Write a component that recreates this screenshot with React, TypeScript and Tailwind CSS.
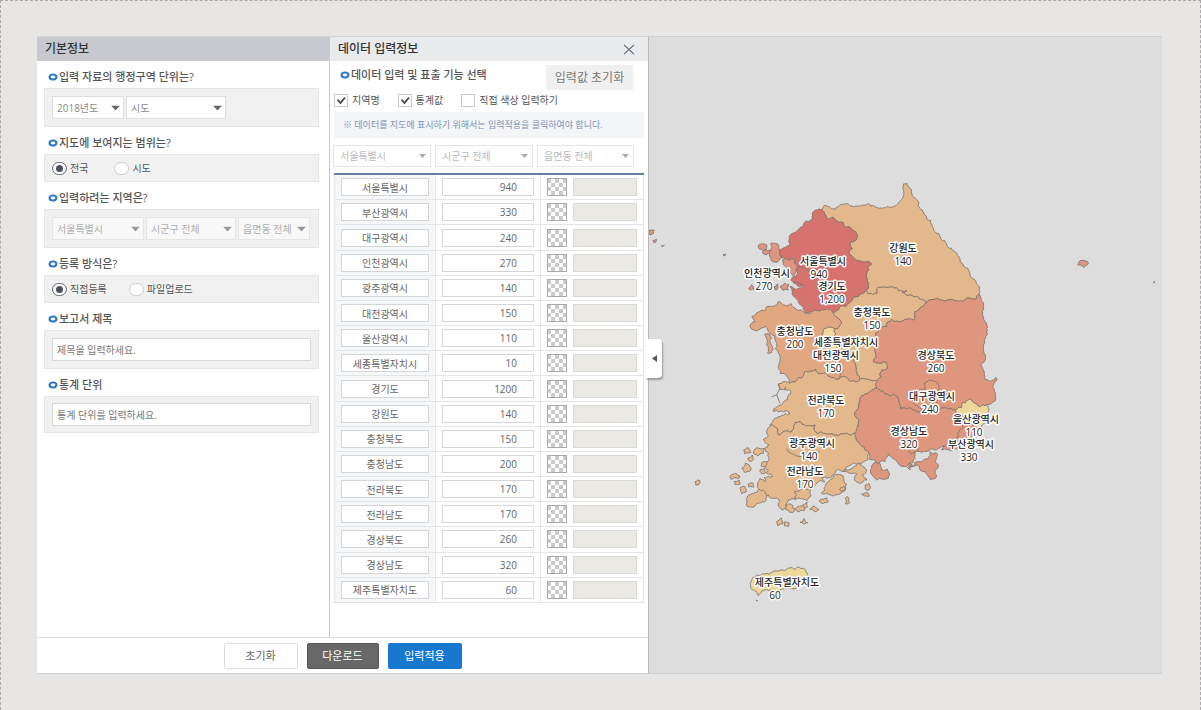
import React, { useId } from "react";

type Point = [number, number];

const REGIONS = ["서울특별시", "부산광역시", "대구광역시", "인천광역시", "광주광역시", "대전광역시", "울산광역시", "세종특별자치시", "경기도", "강원도", "충청북도", "충청남도", "전라북도", "전라남도", "경상북도", "경상남도", "제주특별자치도"];
const VALUES = [940, 330, 240, 270, 140, 150, 110, 10, 1200, 140, 150, 200, 170, 170, 260, 320, 60];

function parse(s: string): Point[] {
  return s.trim().split(/\s+/).map((p) => p.split(",").map(Number) as Point);
}

// Roughens an edge the same way from either end, so neighbouring provinces share one border.
function split(a: Point, b: Point, depth: number): Point[] {
  const dx = b[0] - a[0];
  const dy = b[1] - a[1];
  const len = Math.hypot(dx, dy);
  if (depth === 0 || len < 6) return [a];
  const forward = a[0] < b[0] || (a[0] === b[0] && a[1] < b[1]);
  const seed = Math.sin((a[0] + b[0]) * 12.9898 + (a[1] + b[1]) * 78.233) * 43758.5453;
  const r = (seed - Math.floor(seed) - 0.5) * (forward ? 1 : -1) * 0.46;
  const m: Point = [(a[0] + b[0]) / 2 - dy * r, (a[1] + b[1]) / 2 + dx * r];
  return [...split(a, m, depth - 1), ...split(m, b, depth - 1)];
}

function toPath(s: string): string {
  const pts = parse(s);
  const out = pts.flatMap((p, i) => split(p, pts[(i + 1) % pts.length], 3));
  return "M" + out.map((p) => p[0].toFixed(1) + " " + p[1].toFixed(1)).join("L") + "Z";
}

const ORANGE = "#e3b88d";
const SALMON = "#de967e";
const PEACH = "#e1a780";
const RED = "#d6736f";
const YELLOW = "#eed79a";

const SHAPES: [string, string][] = [
  [ORANGE, "288,120 300,106 340,110 372,104 400,108 430,101 448,108 475,114 500,112 520,98 532,85 535,42 546,40 556,55 562,78 578,92 592,120 605,145 622,165 640,190 660,212 680,235 700,258 715,285 735,312 758,345 762,372 752,388 725,384 700,395 680,388 660,393 640,386 615,390 605,398 590,388 565,380 545,376 532,368 545,362 520,362 505,352 480,350 460,352 455,372 430,372 422,362 424,320 432,300 428,292 440,282 425,275 400,272 385,262 372,245 382,236 375,215 390,212 392,185 378,175 360,172 355,158 335,152 325,142 305,145 298,128"],
  [RED, "288,120 275,120 262,128 262,142 240,155 232,170 210,188 196,195 197,228 180,232 165,240 172,262 190,270 205,265 208,280 215,300 212,318 200,325 205,338 235,346 220,356 195,350 205,378 215,388 222,400 235,412 240,425 250,428 262,426 285,424 300,418 325,430 340,420 352,408 375,398 385,382 410,372 422,362 424,320 432,300 428,292 440,282 425,275 400,272 385,262 372,245 382,236 375,215 390,212 392,185 378,175 360,172 355,158 335,152 325,142 305,145 298,128"],
  [SALMON, "133,245 136,222 150,219 162,226 165,240 172,262 160,273 145,275 136,262"],
  [SALMON, "99,228 112,222 126,226 124,237 104,238"],
  [SALMON, "112,246 124,239 136,242 130,251 116,252"],
  [SALMON, "172,270 190,270 205,265 208,280 215,300 205,318 190,308 185,290"],
  [SALMON, "165,350 178,340 192,345 190,360 172,360"],
  [SALMON, "71,354 80,344 88,357 76,360"],
  [SALMON, "147,350 158,342 159,354 150,360"],
  [ORANGE, "325,430 340,420 352,408 375,398 385,382 410,372 422,362 430,372 455,372 460,352 480,350 505,352 520,362 545,362 532,368 545,376 565,380 590,388 605,398 590,410 570,425 565,450 545,448 520,455 500,448 485,470 465,475 452,490 460,520 450,545 445,575 485,578 488,595 470,600 468,620 455,632 430,628 405,626 395,612 392,590 390,560 350,540 326,505 328,478 345,465 350,455 335,440"],
  [PEACH, "105,425 125,410 140,410 160,395 175,405 200,402 225,420 240,430 262,426 285,424 300,418 325,430 335,440 350,455 345,465 328,478 300,475 298,510 315,540 345,590 345,618 345,625 300,608 280,612 272,598 240,605 232,622 195,640 165,610 160,590 165,570 160,550 155,520 150,498 140,492 130,485 120,468 105,478 75,470 90,455 80,440 95,428"],
  [PEACH, "120,492 132,492 136,520 140,548 128,550 124,525"],
  [YELLOW, "300,475 328,478 326,505 350,540 340,555 315,540 298,510"],
  [PEACH, "315,540 340,555 350,540 390,560 392,590 395,612 405,626 380,634 345,625 345,618 355,600 340,585"],
  [ORANGE, "160,642 195,640 232,622 240,605 272,598 280,612 300,608 345,625 380,634 405,626 430,628 455,632 455,655 435,665 405,685 400,715 388,735 400,760 390,790 355,792 300,790 275,790 270,765 245,768 222,755 200,785 160,795 148,770 135,764 145,750 168,738 195,732 185,722 145,724 165,706 188,690 188,680 196,672 194,660 182,660 182,650 178,660 165,658"],
  [SALMON, "605,398 615,390 640,386 660,393 680,388 700,395 725,384 752,388 762,372 775,410 773,435 788,470 788,492 775,530 770,580 778,610 780,628 790,632 812,622 815,632 808,660 800,700 785,705 750,700 730,690 710,700 710,712 690,720 665,715 630,718 600,720 560,715 525,718 520,690 505,672 480,672 455,655 455,632 468,620 470,600 488,595 485,578 445,575 450,545 460,520 452,490 465,475 485,470 500,448 520,455 545,448 565,450 570,425 590,410"],
  ["#e09f7d", "562,692 575,685 575,668 600,658 596,642 632,635 642,660 625,680 635,700 610,722 580,712"],
  [SALMON, "455,655 480,672 505,672 520,690 525,718 560,715 600,720 630,718 665,715 690,720 700,735 735,750 750,775 735,790 700,800 690,815 660,828 640,835 615,838 590,848 578,840 570,865 550,885 520,882 500,862 490,852 480,875 460,880 435,870 432,850 400,815 388,790 400,760 388,735 400,715 405,685 435,665"],
  [SALMON, "715,760 735,758 752,778 745,795 720,815 705,835 680,842 650,840 655,828 690,815 700,800"],
  [YELLOW, "690,720 710,712 710,700 730,690 750,700 785,705 792,720 782,745 770,770 745,768 735,750 700,735"],
  [SALMON, "440,895 450,878 465,880 468,900 488,898 490,925 465,925 455,930 442,915"],
  [SALMON, "555,890 590,875 610,865 615,845 635,850 630,875 640,890 630,905 635,918 615,928 602,905 585,900 575,885"],
  [SALMON, "550,842 575,832 580,845 560,852"],
  [SALMON, "552,880 562,885 556,900 548,894"],
  [ORANGE, "160,795 200,785 222,755 245,768 270,765 275,790 300,790 355,792 390,790 388,790 400,815 432,850 430,868 410,880 385,878 370,888 350,905 338,898 320,920 305,925 290,920 300,935 270,945 255,960 240,975 215,980 200,985 185,1000 172,1020 160,1005 163,990 145,985 130,975 100,970 98,945 105,925 120,935 118,922 142,920 125,910 130,900 122,880 132,865 120,835 132,825 115,808 130,795 128,775 135,764 148,770"],
  [ORANGE, "290,970 300,950 315,930 325,918 355,918 365,942 360,962 345,972 305,970"],
  [ORANGE, "355,905 375,898 385,890 410,886 425,900 412,915 425,930 405,940 388,930 395,912"],
  [ORANGE, "65,1000 75,975 90,968 100,960 115,960 125,975 120,995 90,1008 68,1010"],
  [ORANGE, "210,990 208,965 225,960 255,960 258,975 245,992 225,985"],
  [ORANGE, "56,840 72,835 78,848 60,852"], [ORANGE, "85,845 95,833 118,835 115,850 98,858"],
  [ORANGE, "68,865 82,855 86,868 74,874"], [ORANGE, "50,895 60,880 75,890 78,900 60,908"],
  [ORANGE, "15,920 35,912 45,918 38,926 18,928"], [ORANGE, "27,935 42,930 45,942 30,943"],
  [ORANGE, "70,942 85,940 85,952 72,952"], [ORANGE, "45,955 60,950 64,965 50,972"],
  [ORANGE, "105,900 118,895 122,908 110,912"], [ORANGE, "110,878 125,875 120,890 108,888"],
  [ORANGE, "182,1005 200,1003 210,1022 195,1027 182,1018"], [ORANGE, "208,1015 235,1008 238,1022 218,1025"],
  [ORANGE, "235,1003 248,995 248,1010 238,1015"], [ORANGE, "255,1018 265,1008 282,1018 268,1024"],
  [ORANGE, "282,993 305,983 310,995 290,1000"], [ORANGE, "360,985 368,980 375,998 362,1002"],
  [ORANGE, "410,972 425,968 432,980 418,978"], [ORANGE, "420,945 432,940 432,960 421,958"],
  [ORANGE, "345,955 358,950 358,962 348,964"],
  [ORANGE, "155,1055 170,1044 175,1060 160,1068"], [ORANGE, "177,1056 192,1058 190,1070 178,1068"],
  [ORANGE, "225,1056 238,1045 248,1058 235,1062"], [ORANGE, "-90,935 -82,930 -74,933 -80,945 -88,945"],
  [YELLOW, "75,1240 90,1220 120,1212 165,1202 190,1194 210,1198 235,1195 248,1210 245,1225 230,1242 180,1255 130,1262 110,1263 100,1277 88,1262 78,1255"],
  [SALMON, "-228,182 -212,180 -214,190 -222,194 -228,192"], [SALMON, "-216,212 -206,208 -208,217 -214,218"],
  [SALMON, "-192,227 -182,225 -188,230"], [SALMON, "-6,254 2,252 0,257 -5,257"],
  [SALMON, "1058,284 1062,276 1078,272 1088,275 1088,284 1076,293"],
  [SALMON, "1286,336 1288,334 1289,338 1287,339"], [ORANGE, "94,1291 96,1290 97,1293 95,1293"],
];

const RIVERS = ["210,300 225,288 240,295 252,305 262,300 278,310", "185,835 190,845 215,858 245,862 270,860 282,845", "160,642 165,655 155,675 165,700", "155,675 140,680", "205,338 214,336 235,346"];

const LABELS: [number, number, string, string][] = [
  [174, 228, "서울특별시", "940"], [254, 215, "강원도", "140"], [118, 240, "인천광역시", "270"], [183, 253, "경기도", "1,200"],
  [223, 279, "충청북도", "150"], [146, 298, "충청남도", "200"], [197, 309, "세종특별자치시", ""], [187, 322, "대전광역시", "150"],
  [287, 322, "경상북도", "260"], [177, 367, "전라북도", "170"], [283, 363, "대구광역시", "240"], [327, 386, "울산광역시", "110"],
  [260, 398, "경상남도", "320"], [322, 411, "부산광역시", "330"], [163, 410, "광주광역시", "140"], [156, 438, "전라남도", "170"],
  [138, 549, "제주특별자치도", "60"],
];

const VALUE_X: Record<string, number> = { "서울특별시": 170, "인천광역시": 115, "대전광역시": 184, "대구광역시": 281, "울산광역시": 325, "부산광역시": 320, "광주광역시": 160, "제주특별자치도": 126 };

function KoreaMap() {
  return (
    <svg className="block h-full w-full" role="img" aria-label="시도별 통계 지도">
      <g transform="translate(76 133) scale(0.33333)" stroke="#85766b" strokeWidth="2.7" strokeLinejoin="round">
        {SHAPES.map(([fill, s], i) => <path key={i} d={toPath(s)} fill={fill} />)}
        {RIVERS.map((s) => <polyline key={s} points={s} fill="none" />)}
      </g>
      <g className="text-[10px] font-medium" fill="#222" stroke="#fff" strokeWidth="3" strokeLinejoin="round" textAnchor="middle" paintOrder="stroke">
        {LABELS.map(([x, y, name, value]) => (
          <g key={name}>
            <text x={x} y={y}>{name}</text>
            {value && <text x={VALUE_X[name] ?? x} y={y + 13}>{value}</text>}
          </g>
        ))}
      </g>
    </svg>
  );
}

function Caption({ children }: { children: React.ReactNode }) {
  return (
    <span className="flex items-center gap-px text-[11px] leading-4 font-medium text-[#555]">
      <svg className="h-[8px] w-[10px] shrink-0" viewBox="0 0 10 8"><ellipse cx="5" cy="4" rx="3.4" ry="2.5" fill="#fff" stroke="#2e7cc4" strokeWidth="2.2" /></svg>
      {children}
    </span>
  );
}

function Section({ title, children, field }: { title: string; children: React.ReactNode; field?: string }) {
  return (
    <section>
      <div className="flex h-[27px] items-center px-1 pt-1">
        {field ? <label htmlFor={field}><Caption>{title}</Caption></label> : <Caption>{title}</Caption>}
      </div>
      <div className="flex items-center border border-[#e6e6e6] bg-[#f1f1f1] px-[7px]">{children}</div>
    </section>
  );
}

function Select({ label, value, width, tone }: { label: string; value: string; width: string; tone: "on" | "off" | "faint" }) {
  const skin = tone === "on" ? "h-[23px] border-[#ddd] bg-white text-[#888]" : tone === "off" ? "h-[23px] border-[#e5e5e5] bg-[#f8f8f8] text-[#b0b0b0]" : "h-[22px] border-[#e6e6e6] bg-white text-[#bbb]";
  const pad = tone === "faint" ? " pl-[6px]" : " pl-1";
  const arrow = tone === "on" ? "#666" : tone === "off" ? "#999" : "#aaa";
  return (
    <span className={"relative block " + width}>
      <select aria-label={label} disabled={tone !== "on"} className={"block w-full appearance-none border text-[10px] leading-4 opacity-100 " + skin + pad}>
        <option>{value}</option>
      </select>
      <svg className={"pointer-events-none absolute top-1/2 h-[5px] -translate-y-1/2 " + (tone === "faint" ? "right-[5px] w-[7px]" : "right-1 w-[9px]")} viewBox="0 0 9 5"><path d="M0 0h9L4.500 5z" fill={arrow} /></svg>
    </span>
  );
}

function Radio({ name, label, checked }: { name: string; label: string; checked?: boolean }) {
  const id = useId();
  return (
    <span className="flex items-center gap-[3px]">
      <input id={id} type="radio" name={name} defaultChecked={checked} className="grid h-[13px] w-[15px] appearance-none place-items-center rounded-full border border-[#ccc] bg-white before:h-[7px] before:w-[7px] before:rounded-full checked:border-[#666a75] checked:before:bg-[#4a4f5b]" />
      <label htmlFor={id} className="text-[10px] leading-4 text-[#555]">{label}</label>
    </span>
  );
}

function Check({ label, checked }: { label: string; checked?: boolean }) {
  const id = useId();
  return (
    <span className="flex items-center gap-1">
      <span className="relative block h-[13px] w-[14px]">
        <input id={id} type="checkbox" defaultChecked={checked} className="peer block h-[13px] w-[14px] appearance-none border border-[#c8c8c8] bg-white" />
        <svg className="pointer-events-none absolute inset-0 hidden h-[13px] w-[14px] peer-checked:block" viewBox="0 0 14 13"><path d="M3.500 5.500l3 3.500 4.500-5.500" fill="none" stroke="#444b57" strokeWidth="1.800" /></svg>
      </span>
      <label htmlFor={id} className="text-[10px] leading-4 text-[#555]">{label}</label>
    </span>
  );
}

function Swatch() {
  const cells = [0, 1, 2, 3].flatMap((r) => [0, 1, 2, 3, 4].filter((c) => (r + c) % 2 === 0).map((c) => [c, r]));
  return (
    <svg className="block h-[18px] w-5" viewBox="0 0 20 18" shapeRendering="crispEdges">
      <rect width="20" height="18" fill="#fff" />
      {cells.map(([c, r]) => <rect key={c + "-" + r} x={c * 4} y={1 + r * 4} width="4" height="4" fill="#cbcbcb" />)}
      <rect x="0.500" y="0.500" width="19" height="17" fill="none" stroke="#aaa" />
    </svg>
  );
}

export default function App() {
  return (
    <main className="grid min-h-screen border-x border-t border-dashed border-[#aaa] bg-[#e7e6e4] pt-[35px] pr-[38px] pb-9 pl-9 font-['Open_Sans','Noto_Sans_CJK_KR',sans-serif]">
      <div className="flex items-stretch border-b border-[#cdd0d4]">
        <div className="relative z-10 flex w-[612px] shrink-0 flex-col border-t border-r border-t-[#d4d4d4] border-r-[#b8b8b8] bg-white">
          <div className="flex flex-1">
            <section className="w-[292px] shrink-0">
              <h2 className="h-6 bg-[#c8c9cf] px-2 text-[12px] leading-6 font-medium text-[#333]">기본정보</h2>
              <div className="pr-[10px] pl-[7px]">
                <Section title="입력 자료의 행정구역 단위는?">
                  <div className="flex gap-[2px] py-[7px]">
                    <Select label="연도" value="2018년도" width="w-[72px]" tone="on" />
                    <Select label="행정구역 단위" value="시도" width="w-[100px]" tone="on" />
                  </div>
                </Section>
                <Section title="지도에 보여지는 범위는?">
                  <div className="flex h-[26px] items-center gap-[26px]"><Radio name="range" label="전국" checked /><Radio name="range" label="시도" /></div>
                </Section>
                <Section title="입력하려는 지역은?">
                  <div className="flex gap-[2px] py-[7px]">
                    <Select label="시도" value="서울특별시" width="w-[92px]" tone="off" />
                    <Select label="시군구" value="시군구 전체" width="w-[90px]" tone="off" />
                    <Select label="읍면동" value="읍면동 전체" width="w-[72px]" tone="off" />
                  </div>
                </Section>
                <Section title="등록 방식은?">
                  <div className="flex h-[26px] items-center gap-[22px]"><Radio name="method" label="직접등록" checked /><Radio name="method" label="파일업로드" /></div>
                </Section>
                <Section title="보고서 제목" field="report-title">
                  <div className="w-full py-[7px]"><input id="report-title" placeholder="제목을 입력하세요." className="block h-[23px] w-full border border-[#d8d8d8] bg-white px-1 text-[10px] leading-4 text-[#666] placeholder:text-[#777]" /></div>
                </Section>
                <Section title="통계 단위" field="stat-unit">
                  <div className="w-full py-[6px]"><input id="stat-unit" placeholder="통계 단위를 입력하세요." className="block h-[23px] w-full border border-[#d8d8d8] bg-white px-1 text-[10px] leading-4 text-[#666] placeholder:text-[#777]" /></div>
                </Section>
              </div>
            </section>
            <section className="min-w-0 flex-1 border-l border-[#c9cace] pb-[34px]">
              <div className="flex h-6 items-center justify-between bg-[#e9eaec] pr-[13px] pl-2">
                <h2 className="text-[12px] leading-6 font-medium text-[#333]">데이터 입력정보</h2>
                <button aria-label="닫기" className="block"><svg className="block h-[11px] w-3" viewBox="0 0 12 11"><path d="M1 .8l10 9.400M11 .8L1 10.200" stroke="#596675" strokeWidth="1.100" /></svg></button>
              </div>
              <div className="flex h-[31px] justify-between pt-1 pr-[15px] pl-[10px]">
                <div className="pt-[2px]"><Caption>데이터 입력 및 표출 기능 선택</Caption></div>
                <button className="h-[25px] w-[87px] bg-[#f0f0f0] text-[12px] leading-6 text-[#777]">입력값 초기화</button>
              </div>
              <div className="flex h-4 items-center gap-[18px] pl-1"><Check label="지역명" checked /><Check label="통계값" checked /><Check label="직접 색상 입력하기" /></div>
              <p className="mt-1 mr-1 ml-1 h-[26px] bg-[#f4f5f6] px-[9px] text-[9px] leading-[26px] text-[#7b92b5]">※ 데이터를 지도에 표시하기 위해서는 입력적용을 클릭하여야 합니다.</p>
              <div className="mt-[7px] mb-[6px] flex gap-1 px-[3px]">
                <Select label="표 시도" value="서울특별시" width="w-[98px]" tone="faint" />
                <Select label="표 시군구" value="시군구 전체" width="w-[98px]" tone="faint" />
                <Select label="표 읍면동" value="읍면동 전체" width="w-[97px]" tone="faint" />
              </div>
              <div className="px-1">
                <table className="h-[430px] w-full table-fixed border-collapse border border-t-2 border-[#e2e4e6] border-t-[#66809e]">
                  <colgroup><col className="w-[101px]" /><col className="w-[105px]" /><col /></colgroup>
                  <tbody>
                    {REGIONS.map((name, i) => (
                      <tr key={name} className="border-b border-[#e2e4e6]">
                        <td className="border-r border-[#e6e8ea] bg-[#f6f7f8] px-[6px] py-0"><input aria-label={"지역명 " + name} defaultValue={name} className="block h-[18px] w-full border border-[#d3d5d7] bg-white text-center text-[10px] leading-4 text-[#666]" /></td>
                        <td className="border-r border-[#e6e8ea] px-[6px] py-0"><input aria-label={name + " 통계값"} defaultValue={VALUES[i]} className="block h-[18px] w-full border border-[#d3d5d7] bg-white pr-4 text-right text-[10px] leading-4 text-[#666]" /></td>
                        <td className="px-[6px] py-0"><div className="flex gap-[6px]"><Swatch /><input aria-label={name + " 색상"} readOnly className="block h-[18px] min-w-0 flex-1 border border-[#d9d9d6] bg-[#eae9e4]" /></div></td>
                      </tr>
                    ))}
                  </tbody>
                </table>
              </div>
            </section>
          </div>
          <footer className="flex h-9 items-center justify-center gap-[9px] border-t border-[#dedede]">
            <button className="h-[26px] w-[74px] rounded-[2px] border border-[#ddd] bg-white text-[11px] leading-4 text-[#666]">초기화</button>
            <button className="h-[26px] w-[72px] rounded-[2px] border border-[#555] bg-[#686868] text-[11px] leading-4 text-white">다운로드</button>
            <button className="h-[26px] w-[74px] rounded-[2px] bg-[#1878cf] text-[11px] leading-4 text-white">입력적용</button>
          </footer>
          <button aria-label="패널 접기" className="absolute top-[302px] -right-[14px] flex h-[39px] w-4 items-center justify-center rounded-r-[4px] bg-white shadow-[1px_2px_2px_#999]">
            <svg className="h-[7px] w-[5px]" viewBox="0 0 5 7"><path d="M5 0v7L0 3.500z" fill="#555" /></svg>
          </button>
        </div>
        <div className="min-w-0 flex-1 border-t border-[#cfcfcf] bg-[#ddd]"><KoreaMap /></div>
      </div>
    </main>
  );
}
